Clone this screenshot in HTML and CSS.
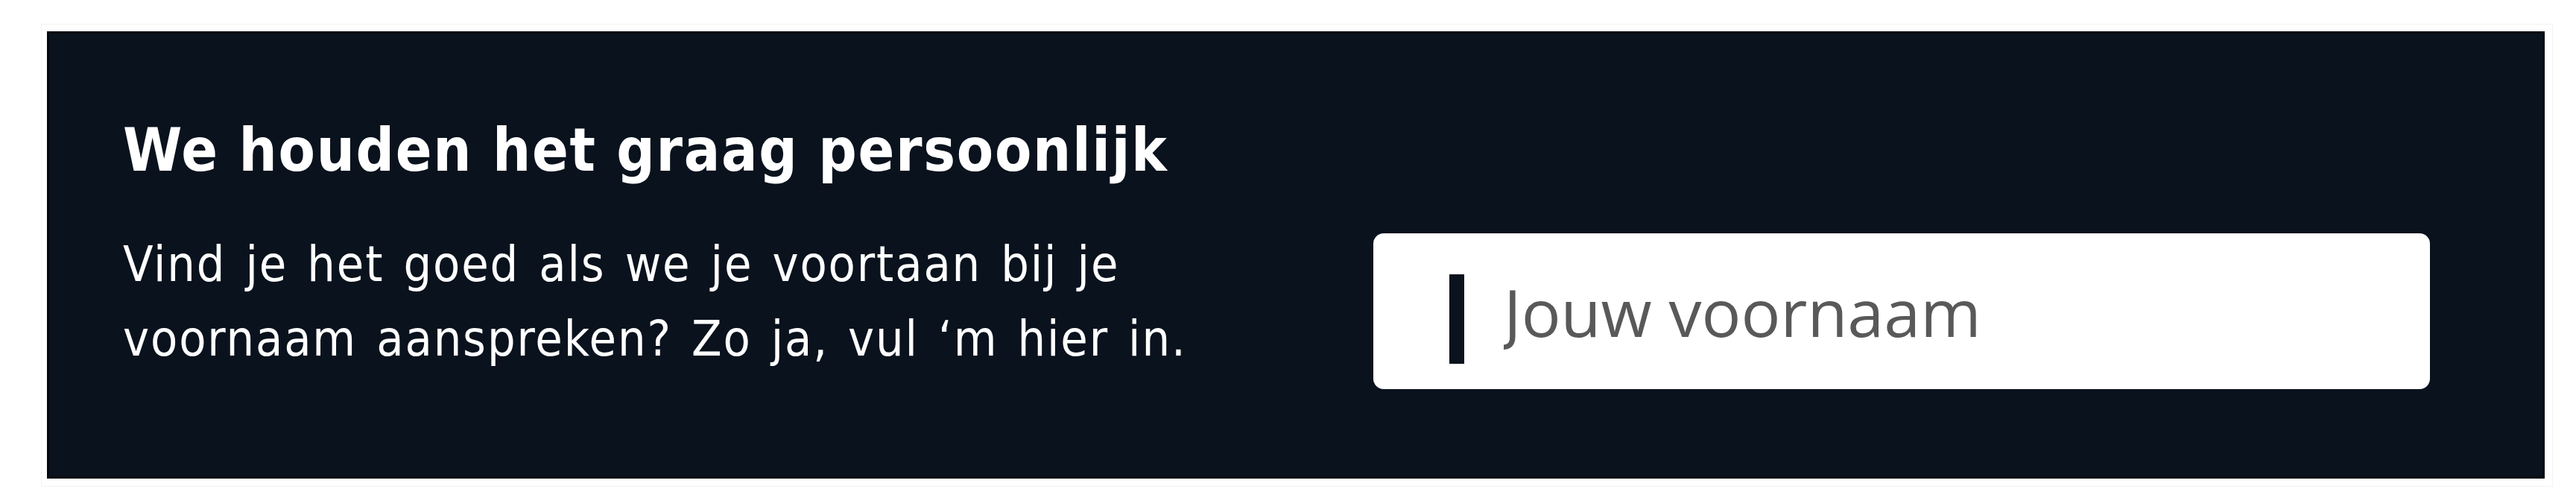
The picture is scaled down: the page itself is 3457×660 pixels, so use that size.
FILE: index.html
```html
<!DOCTYPE html>
<html lang="nl">
<head>
<meta charset="utf-8">
<title>We houden het graag persoonlijk</title>
<link rel="stylesheet" href="styles.css">
</head>
<body>
<div class="frame">
  <section class="panel">
    <h2 class="title">We houden het graag persoonlijk</h2>
    <div class="row">
      <p class="text">Vind je het goed als we je voortaan bij je voornaam aanspreken? Zo ja, vul ‘m hier in.</p>
      <label class="field">
        <span class="caret"></span>
        <input class="name" type="text" placeholder="Jouw voornaam">
      </label>
    </div>
  </section>
</div>
</body>
</html>
```
FILE: styles.css
```css
html, body {
  margin: 0;
  padding: 0;
  background: #ffffff;
}

.frame {
  box-sizing: border-box;
  margin: 32px 0 0 55px;
  width: 3371px;
  border: 1px solid #f3f3f3;
  padding: 9px 10px 10px 7px;
}

.panel {
  box-sizing: border-box;
  width: 3352px;
  background: #09121d;
  box-shadow: inset 0 0 0 3px #03070d;
  padding: 112px 154px 120px 102px;
  color: #ffffff;
}

.title {
  margin: 0;
  font-family: "DejaVu Sans Condensed", "DejaVu Sans", sans-serif;
  font-weight: bold;
  font-size: 80px;
  line-height: 96px;
  letter-spacing: 1.7px;
}

.row {
  display: flex;
  justify-content: space-between;
  align-items: flex-start;
  margin-top: 55px;
}

.text {
  margin: 0;
  width: 1560px;
  font-family: "DejaVu Sans Condensed", "DejaVu Sans", sans-serif;
  font-size: 66px;
  line-height: 100px;
  letter-spacing: 1.85px;
  word-spacing: 5.4px;
}

.field {
  box-sizing: border-box;
  display: flex;
  align-items: center;
  width: 1418px;
  height: 209px;
  margin-top: 8px;
  padding-left: 102px;
  background: #ffffff;
  border-radius: 14px;
}

.caret {
  flex: none;
  width: 20px;
  height: 120px;
  margin-top: 20px;
  background: #09121d;
}

.name {
  flex: 1;
  min-width: 0;
  margin-left: 53px;
  padding: 0;
  border: none;
  outline: none;
  background: transparent;
  font-family: "Open Sans", "Noto Sans", sans-serif;
  font-size: 88px;
  line-height: 120px;
  height: 120px;
  color: #222222;
}

.name::placeholder {
  color: #595959;
  opacity: 1;
}
```
